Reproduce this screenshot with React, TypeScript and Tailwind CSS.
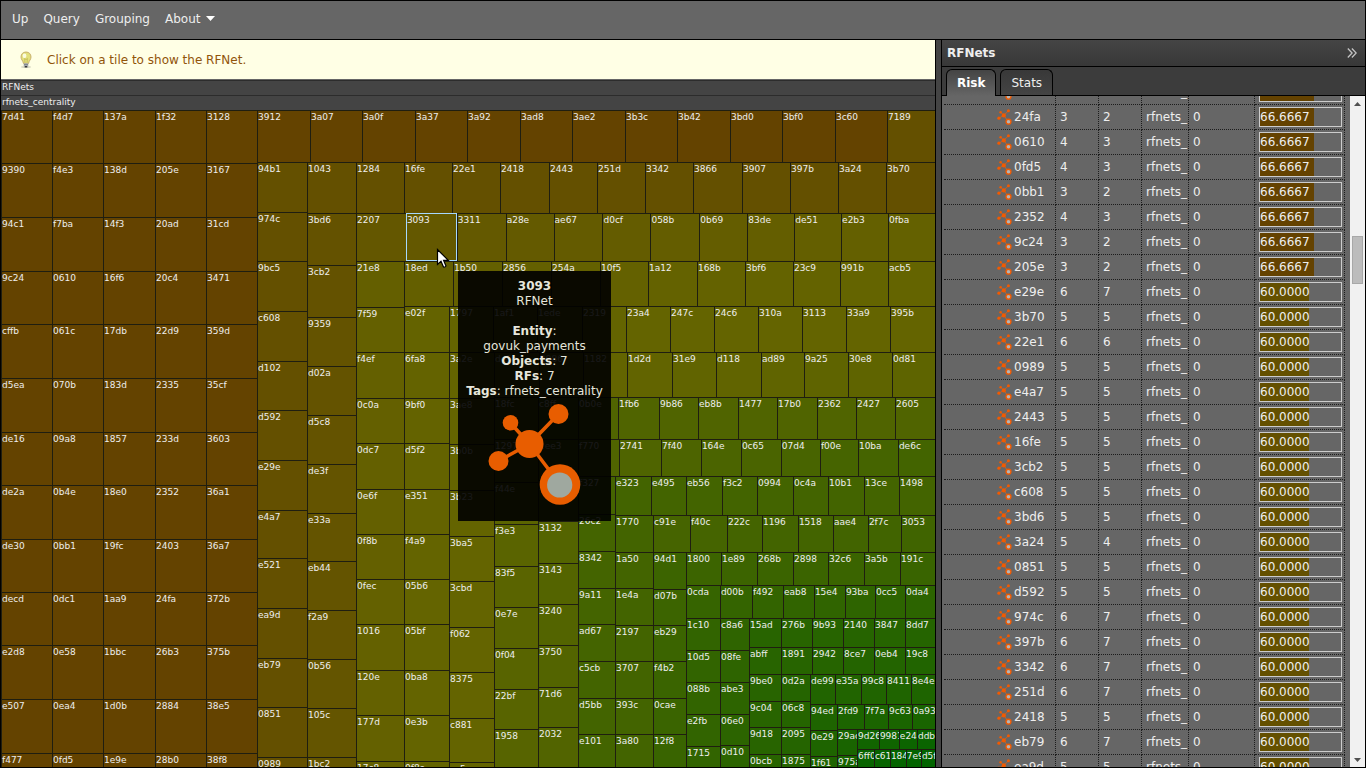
import React from "react";

type Strip = {
  dir: "col" | "row";
  hues: [number, number];
  labels: string;
  edges: number[];
  end: number;
};

const LEFT = 1;
const TOP = 110;
const RIGHT = 935;
const BOTTOM = 767;
const SELECTED = "3093";

const firstRows = [110, 163, 217, 271, 324, 378, 432, 485, 539, 593, 646, 700, 754];

// Squarified layout: each strip takes one side of the space the earlier ones left free.
const strips: Strip[] = [
  { dir: "col", hues: [40, 40], end: 52, edges: firstRows, labels: "7d41 9390 94c1 9c24 cffb d5ea de16 de2a de30 decd e2d8 e507 f477" },
  { dir: "col", hues: [40, 40], end: 103, edges: firstRows, labels: "f4d7 f4e3 f7ba 0610 061c 070b 09a8 0b4e 0bb1 0dc1 0e58 0ea4 0fd5" },
  { dir: "col", hues: [40, 40], end: 155, edges: firstRows, labels: "137a 138d 14f3 16f6 17db 183d 1857 18e0 19fc 1aa9 1bbc 1d0b 1e9e" },
  { dir: "col", hues: [40, 40], end: 206, edges: firstRows, labels: "1f32 205e 20ad 20c4 22d9 2335 233d 2352 2403 24fa 26b3 2884 28b0" },
  { dir: "col", hues: [40, 40], end: 257, edges: firstRows, labels: "3128 3167 31cd 3471 359d 35cf 3603 36a1 36a7 372b 375b 38e5 38f8" },
  { dir: "row", hues: [40, 40], end: 162, edges: [257, 310, 362, 415, 467, 520, 572, 625, 677, 730, 782, 835, 887], labels: "3912 3a07 3a0f 3a37 3a92 3ad8 3ae2 3b3c 3b42 3bd0 3bf0 3c60 7189" },
  { dir: "col", hues: [48, 48], end: 307, edges: [162, 212, 261, 311, 361, 410, 460, 510, 559, 609, 659, 708, 758], labels: "94b1 974c 9bc5 c608 d102 d592 e29e e4a7 e521 ea9d eb79 0851 0989" },
  { dir: "row", hues: [48, 48], end: 213, edges: [307, 356, 404, 452, 500, 549, 597, 645, 693, 742, 790, 838, 886], labels: "1043 1284 16fe 22e1 2418 2443 251d 3342 3866 3907 397b 3a24 3b70" },
  { dir: "col", hues: [49, 51], end: 356, edges: [213, 265, 317, 366, 415, 464, 513, 562, 611, 660, 709, 758], labels: "3bd6 3cb2 9359 d02a d5c8 de3f e33a eb44 f2a9 0b56 105c 1bc2" },
  { dir: "row", hues: [52, 58], end: 261, edges: [356, 406, 456, 505, 553, 602, 650, 699, 747, 794, 841, 888], labels: "2207 3093 3311 a28e ae67 d0cf 058b 0b69 83de de51 e2b3 0fba" },
  { dir: "col", hues: [57, 58], end: 404, edges: [261, 307, 352, 398, 443, 489, 534, 580, 625, 671, 716, 762], labels: "21e8 7f59 f4ef 0c0a 0dc7 0e6f 0f8b 0fec 1016 120e 177d 17c8" },
  { dir: "row", hues: [57, 60], end: 306, edges: [404, 453, 502, 551, 600, 648, 697, 745, 793, 840, 888], labels: "18ed 1b50 2856 254a 10f5 1a12 168b 3bf6 23c9 991b acb5" },
  { dir: "col", hues: [59, 60], end: 449, edges: [306, 352, 398, 443, 489, 534, 580, 625, 671, 716, 762], labels: "e02f 6fa8 9bf0 d5f2 e351 f4a9 05b6 05bf 0ba8 0e3b 0f8e" },
  { dir: "row", hues: [60, 60], end: 352, edges: [449, 493, 537, 582, 626, 670, 714, 758, 802, 846, 890], labels: "1797 1af1 1ede 2319 23a4 247c 24c6 310a 3113 33a9 395b" },
  { dir: "col", hues: [60, 60], end: 494, edges: [352, 398, 444, 490, 536, 582, 628, 673, 719, 763], labels: "3a2e 3ae8 3b0b 3b23 3ba5 3cbd f062 8375 c881 cc5e" },
  { dir: "row", hues: [60, 64], end: 397, edges: [494, 539, 583, 627, 672, 716, 761, 804, 848, 892], labels: "de5c 2986 1182 1d2d 31e9 d118 ad89 9a25 30e8 0d81" },
  { dir: "col", hues: [65, 68], end: 538, edges: [397, 439, 482, 524, 566, 607, 648, 689, 729], labels: "18fc 1297 f44e f3e3 83f5 0e7e 0f04 22bf 1958" },
  { dir: "col", hues: [69, 71], end: 578, edges: [397, 439, 480, 521, 563, 604, 645, 687, 727], labels: "c8ff 2ee3 3045 3132 3143 3240 3750 71d6 2032" },
  { dir: "row", hues: [72, 72], end: 439, edges: [578, 618, 659, 698, 738, 777, 817, 856, 895], labels: "0b0e 1fb6 9b86 eb8b 1477 17b0 2362 2427 2605" },
  { dir: "row", hues: [72, 80], end: 476, edges: [578, 619, 661, 701, 741, 781, 820, 858, 898], labels: "f770 2741 7f40 164e 0c65 07d4 f00e 10ba de6c" },
  { dir: "col", hues: [79, 80], end: 615, edges: [476, 514, 551, 588, 624, 661, 698, 734], labels: "f327 26c2 8342 9a11 ad67 c5cb d5bb e101" },
  { dir: "row", hues: [80, 80], end: 515, edges: [615, 651, 686, 722, 757, 793, 828, 864, 899], labels: "e323 e495 eb56 f3c2 0994 0c4a 10b1 13ce 1498" },
  { dir: "col", hues: [80, 80], end: 653, edges: [515, 552, 588, 625, 661, 698, 734], labels: "1770 1a50 1e4a 2197 3707 393c 3a80" },
  { dir: "row", hues: [78, 82], end: 552, edges: [653, 690, 727, 762, 798, 833, 868, 901], labels: "c91e f40c 222c 1196 1518 aae4 2f7c 3053" },
  { dir: "col", hues: [84, 86], end: 686, edges: [552, 589, 625, 661, 698, 734], labels: "94d1 d07b eb29 f4b2 0cae 12f8" },
  { dir: "row", hues: [84, 86], end: 585, edges: [686, 721, 757, 793, 828, 864, 900], labels: "1800 1e89 268b 2898 32c6 3a5b 191c" },
  { dir: "row", hues: [88, 94], end: 618, edges: [686, 720, 752, 783, 814, 845, 875, 905], labels: "0cda d00b f492 eab8 15e4 93ba 0cc5 0da4" },
  { dir: "col", hues: [90, 90], end: 720, edges: [618, 650, 682, 714, 746], labels: "1c10 10d5 088b e2fb 1715" },
  { dir: "col", hues: [92, 94], end: 749, edges: [618, 650, 682, 714, 745], labels: "c8a6 08fe abe3 06e0 0d10" },
  { dir: "row", hues: [96, 98], end: 647, edges: [749, 781, 812, 843, 874, 905], labels: "15ad 276b 9b93 2140 3847 8dd7" },
  { dir: "row", hues: [96, 100], end: 674, edges: [749, 781, 812, 843, 874, 905], labels: "abff 1891 2942 8ce7 0eb4 19c8" },
  { dir: "col", hues: [96, 96], end: 781, edges: [674, 701, 727, 754], labels: "9be0 9c04 9d18 0bcb" },
  { dir: "col", hues: [98, 98], end: 810, edges: [674, 701, 727, 754], labels: "0d2a 06c8 2095 1875" },
  { dir: "row", hues: [100, 102], end: 704, edges: [810, 835, 861, 886, 911], labels: "de99 e35a 99c8 8411 8e4e" },
  { dir: "col", hues: [102, 102], end: 837, edges: [704, 730, 756], labels: "94ed 0e29 1f61" },
  { dir: "row", hues: [103, 105], end: 729, edges: [837, 864, 888, 912], labels: "2fd9 7f7a 9c63 0a93" },
  { dir: "col", hues: [105, 106], end: 857, edges: [729, 755], labels: "29ac 975a" },
  { dir: "row", hues: [110, 114], end: 749, edges: [857, 879, 899, 917], labels: "9d26 9981 e24b ddb1" },
  { dir: "row", hues: [115, 119], end: 767, edges: [857, 874, 890, 906, 921], labels: "6ff0 c618 1844 7e9a d5f1" },
];

const grow = (n: number): React.CSSProperties => ({ flex: `${n} ${n} 0px` });

function Strips({ index, x, y }: { index: number; x: number; y: number }) {
  const strip = strips[index];
  if (!strip) return null;
  const isCol = strip.dir === "col";
  const labels = strip.labels.split(" ");
  const limit = isCol ? BOTTOM : RIGHT;
  const [from, to] = strip.hues;
  return (
    <div className={isCol ? "flex size-full min-h-0 min-w-0 flex-row" : "flex size-full min-h-0 min-w-0 flex-col"}>
      <div
        className={isCol ? "flex min-h-0 min-w-0 flex-col" : "flex min-h-0 min-w-0 flex-row"}
        style={grow(strip.end - (isCol ? x : y))}
      >
        {labels.map((label, i) => {
          const size = (strip.edges[i + 1] ?? limit) - strip.edges[i];
          const hue = label === "7189" ? 48 : from + ((to - from) * i) / (labels.length - 1);
          return (
            <button
              key={label}
              type="button"
              className={
                label === SELECTED
                  ? "flex min-h-0 min-w-0 items-start border border-[#a6d8ff] text-left leading-3"
                  : "flex min-h-0 min-w-0 items-start border-t border-l border-[#1f1e10] text-left leading-3"
              }
              style={{ ...grow(size), backgroundColor: `hsl(${hue} 100% 19.7%)` }}
            >
              {label}
            </button>
          );
        })}
      </div>
      {index < strips.length - 1 && (
        <div className="min-h-0 min-w-0" style={grow(isCol ? RIGHT - strip.end : BOTTOM - strip.end)}>
          <Strips index={index + 1} x={isCol ? strip.end : x} y={isCol ? y : strip.end} />
        </div>
      )}
    </div>
  );
}

function NetIcon({ className, inner }: { className: string; inner: string }) {
  return (
    <svg viewBox="0 0 94 103" className={className} aria-hidden="true">
      <g stroke="#e85d00" strokeWidth="3.6">
        <path d="M41.5 41 L70.5 11 M41.5 41 L22.5 20 M41.5 41 L10.5 58 M41.5 41 L72 81.5" />
      </g>
      <g fill="#e85d00">
        <circle cx="41.5" cy="41" r="14" />
        <circle cx="70.5" cy="11" r="10" />
        <circle cx="22.5" cy="19.8" r="7.8" />
        <circle cx="10.5" cy="58" r="10" />
        <circle cx="72" cy="81.5" r="20.3" />
      </g>
      <circle cx="71.7" cy="82" r="12.6" fill={inner} />
    </svg>
  );
}

function SmallNetIcon() {
  return (
    <svg viewBox="0 0 16 16" className="size-4 shrink-0" aria-hidden="true">
      <path d="M6.8 6.4 L11.4 1.8 M6.8 6.4 L3.6 3.2 M6.8 6.4 L1.8 9.2 M6.8 6.4 L11.4 12.6" stroke="#d9621c" strokeWidth="0.8" />
      <g fill="#f25a00">
        <circle cx="6.8" cy="6.4" r="2.1" />
        <circle cx="11.4" cy="1.8" r="1.5" />
        <circle cx="3.6" cy="3.2" r="1.2" />
        <circle cx="1.9" cy="9.2" r="1.6" />
        <circle cx="11.5" cy="12.7" r="3.1" />
      </g>
      <circle cx="11.5" cy="12.7" r="1.8" fill="#b5b5b5" />
    </svg>
  );
}

function Bulb() {
  return (
    <svg viewBox="0 0 16 18" className="h-[18px] w-4 shrink-0" aria-hidden="true">
      <ellipse cx="8" cy="16" rx="5" ry="1" fill="#d5d5c2" />
      <path d="M8 1 C4.9 1 3 3.2 3 6 C3 8.6 5 9.6 5.5 12.5 H10.5 C11 9.6 13 8.6 13 6 C13 3.2 11.1 1 8 1 Z" fill="#e3e07c" stroke="#c4a968" strokeWidth="0.9" />
      <ellipse cx="6.5" cy="4.8" rx="1.9" ry="2.4" fill="#fbfbe0" />
      <path d="M7 12 L6.6 7.5 L8 8.6 L9.4 7.5 L9 12" fill="none" stroke="#b6aa4c" strokeWidth="0.6" />
      <rect x="5.7" y="12.3" width="4.6" height="3" rx="0.6" fill="#a9adb2" />
      <path d="M6 13.6 H10" stroke="#6f7479" strokeWidth="0.7" />
      <rect x="6.6" y="15.1" width="2.8" height="1.4" rx="0.6" fill="#34383c" />
    </svg>
  );
}

const rows: [string, number, number, number][] = [
  ["3167", 3, 2, 66.6667],
  ["24fa", 3, 2, 66.6667],
  ["0610", 4, 3, 66.6667],
  ["0fd5", 4, 3, 66.6667],
  ["0bb1", 3, 2, 66.6667],
  ["2352", 4, 3, 66.6667],
  ["9c24", 3, 2, 66.6667],
  ["205e", 3, 2, 66.6667],
  ["e29e", 6, 7, 60],
  ["3b70", 5, 5, 60],
  ["22e1", 6, 6, 60],
  ["0989", 5, 5, 60],
  ["e4a7", 5, 5, 60],
  ["2443", 5, 5, 60],
  ["16fe", 5, 5, 60],
  ["3cb2", 5, 5, 60],
  ["c608", 5, 5, 60],
  ["3bd6", 5, 5, 60],
  ["3a24", 5, 4, 60],
  ["0851", 5, 5, 60],
  ["d592", 5, 5, 60],
  ["974c", 6, 7, 60],
  ["397b", 6, 7, 60],
  ["3342", 6, 7, 60],
  ["251d", 6, 7, 60],
  ["2418", 5, 5, 60],
  ["eb79", 6, 7, 60],
  ["ea9d", 5, 5, 60],
];

function RiskTable() {
  const cell = "border-r border-b border-dotted border-[#1c1c1c] p-0 pl-1 whitespace-nowrap";
  return (
    <table className="-mt-4 ml-0.5 w-[401px] shrink-0 table-fixed border-separate border-spacing-0 self-start">
      <colgroup>
        <col className="w-28" />
        <col className="w-[43px]" />
        <col className="w-[43px]" />
        <col className="w-[47px]" />
        <col className="w-[66px]" />
        <col className="w-[90px]" />
      </colgroup>
      <tbody>
        {rows.map(([name, objects, rfs, risk]) => (
          <tr key={name} className="h-[25px]">
            <td className="overflow-hidden border-r border-b border-dotted border-[#1c1c1c] p-0 pl-[53px]">
              <div className="flex items-center gap-px">
                <SmallNetIcon />
                <span>{name}</span>
              </div>
            </td>
            <td className={cell}>{objects}</td>
            <td className={cell}>{rfs}</td>
            <td className={cell}>rfnets_</td>
            <td className={cell}>0</td>
            <td className="border-r border-b border-dotted border-[#1c1c1c] p-0 pr-0.5 pl-1">
              <div className="h-5 border border-[#cccccc]">
                <div
                  className={risk > 60 ? "h-full bg-[#644200] leading-[18px]" : "h-full bg-[#645000] leading-[18px]"}
                  style={{ width: `${risk}%` }}
                >
                  {risk.toFixed(4)}
                </div>
              </div>
            </td>
          </tr>
        ))}
      </tbody>
    </table>
  );
}

function Scrollbar() {
  return (
    <div className="ml-auto flex w-[15px] shrink-0 flex-col items-center bg-[#f1f1f1]" aria-hidden="true">
      <svg viewBox="0 0 15 15" className="size-[15px]">
        <path d="M4 10 L7.5 6 L11 10 Z" fill="#505050" />
      </svg>
      <div className="mt-[125px] h-12 w-[11px] border border-[#a8a8a8] bg-[#bcbcbc]" />
      <svg viewBox="0 0 15 15" className="mt-auto size-[15px]">
        <path d="M4 6 L7.5 10 L11 6 Z" fill="#505050" />
      </svg>
    </div>
  );
}

function Tooltip() {
  return (
    <div
      role="tooltip"
      className="absolute top-[270px] left-[457px] z-20 flex h-[250px] w-[153px] flex-col items-center bg-black/90 pt-2 text-center leading-[15px] text-[#e6e6dc]"
    >
      <strong>{SELECTED}</strong>
      <span>RFNet</span>
      <div className="mt-[15px] px-1">
        <div>
          <b>Entity</b>:<br />
          govuk_payments
        </div>
        <div>
          <b>Objects</b>: 7
        </div>
        <div>
          <b>RFs</b>: 7
        </div>
        <div className="whitespace-nowrap">
          <b>Tags</b>: rfnets_centrality
        </div>
      </div>
      <NetIcon className="mt-1 h-[103px] w-[94px]" inner="#9fa89f" />
    </div>
  );
}

function Cursor() {
  return (
    <svg viewBox="0 0 14 21" className="pointer-events-none absolute top-[247px] left-[435px] z-30 h-[21px] w-3.5" aria-hidden="true">
      <path d="M1.5 1.5 V16.5 L5 13.3 L7.5 19 Q9 19.5 10 18 L7.6 12.4 H12.3 Z" fill="#fff" stroke="#000" strokeWidth="1.2" />
    </svg>
  );
}

export default function App() {
  return (
    <div className="relative flex h-screen flex-col overflow-hidden border border-black bg-[#444444] font-['DejaVu_Sans',sans-serif] text-[12px] text-[#eeeeee]">
      <nav className="flex h-[39px] shrink-0 items-center gap-[15px] border-b border-black bg-[#666666] px-[11px] pb-[3px]">
        <button type="button">Up</button>
        <button type="button">Query</button>
        <button type="button">Grouping</button>
        <button type="button" className="flex items-center gap-1.5">
          About
          <svg viewBox="0 0 9 5" className="h-[5px] w-[9px]" aria-hidden="true">
            <path d="M0 0 H9 L4.5 5 Z" fill="#fff" />
          </svg>
        </button>
      </nav>

      <div className="flex min-h-0 flex-1">
        <main className="flex min-w-0 flex-1 flex-col overflow-hidden">
          <div className="flex h-10 shrink-0 items-center gap-[13px] border-b border-[#666666] bg-[#ffffe5] pl-[17px] text-[#91540a]">
            <Bulb />
            <p>Click on a tile to show the RFNet.</p>
          </div>
          <div className="h-[15px] shrink-0 border-t border-[#2c2c2c] bg-[#444444] pl-px text-[9px] leading-[13px]">RFNets</div>
          <div className="h-[15px] shrink-0 border-t border-[#2c2c2c] bg-[#444444] pl-px text-[9px] leading-[13px]">
            rfnets_centrality
          </div>
          <div className="min-h-0 flex-1 text-[9px]">
            <Strips index={0} x={LEFT} y={TOP} />
          </div>
        </main>

        <div className="w-[7px] shrink-0 border-x border-black bg-[#444444]" />

        <aside className="flex w-[423px] shrink-0 flex-col">
          <header className="flex h-[27px] shrink-0 items-center justify-between border-b border-black bg-linear-to-b from-[#454545] to-[#383838] pr-2 pl-[5px]">
            <h2 className="font-bold">RFNets</h2>
            <button type="button" aria-label="Collapse panel">
              <svg viewBox="0 0 10 10" className="size-2.5" fill="none" stroke="#c4c4c4" strokeWidth="1.3" aria-hidden="true">
                <path d="M0.8 0.5 L5.1 5 L0.8 9.5 M4.9 0.5 L9.2 5 L4.9 9.5" />
              </svg>
            </button>
          </header>
          <div role="tablist" className="flex h-[29px] shrink-0 items-end gap-1 border-b border-black bg-[#3c3c3c] pl-1">
            <button
              type="button"
              role="tab"
              aria-selected="true"
              className="-mb-px h-[27px] rounded-t-md border border-b-0 border-black bg-linear-to-b from-[#444444] to-[#666666] px-2.5 font-bold text-white"
            >
              Risk
            </button>
            <button
              type="button"
              role="tab"
              aria-selected="false"
              className="h-[26px] rounded-t-md border border-b-0 border-black bg-linear-to-b from-[#383838] to-[#444444] px-2.5"
            >
              Stats
            </button>
          </div>
          <div className="flex min-h-0 flex-1 overflow-hidden bg-[#666666]">
            <RiskTable />
            <Scrollbar />
          </div>
        </aside>
      </div>

      <Tooltip />
      <Cursor />
    </div>
  );
}
